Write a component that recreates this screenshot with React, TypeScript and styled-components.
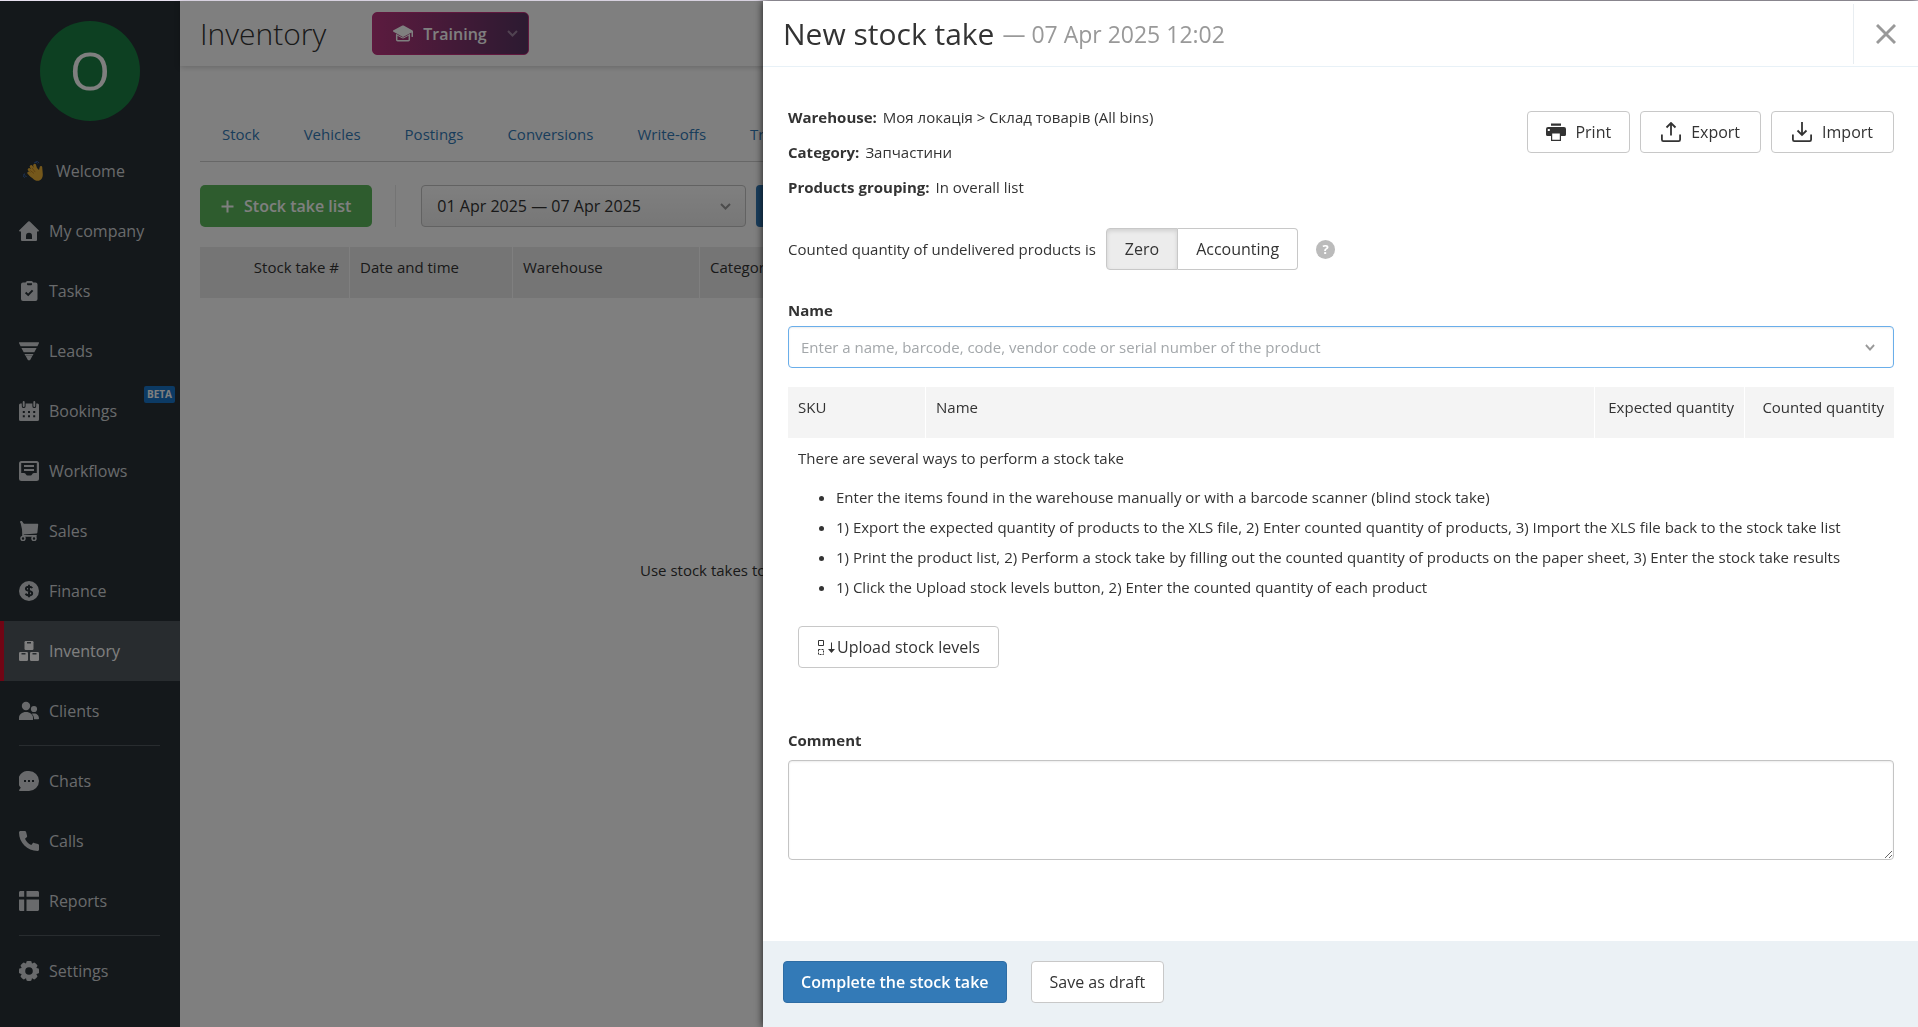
import React from "react";
import styled, { createGlobalStyle, css } from "styled-components";

const GlobalStyle = createGlobalStyle`
  *, *::before, *::after { box-sizing: border-box; }
  body {
    margin: 0;
    background: #fff;
    color: #333;
    font-family: "Open Sans", "Noto Sans", sans-serif;
    font-size: 15px;
    line-height: 20px;
    overflow: hidden;
  }
  button, input, select, textarea { font-family: inherit; color: inherit; margin: 0; }
  h1, h2, p, ul, dl, dd { margin: 0; padding: 0; }
  svg { display: block; flex: none; }
`;

/* ---------- shell ---------- */

const Page = styled.div`
  height: 100vh;
  display: flex;
  flex-direction: column;
  border-top: 1px solid #e6dfee;
`;

const Shell = styled.div`
  flex: 1;
  min-height: 0;
  display: flex;
`;

const Overlay = styled.div`
  position: fixed;
  inset: 1px 0 0 0;
  background: rgba(0, 0, 0, 0.5);
`;

/* ---------- sidebar ---------- */

const Sidebar = styled.nav`
  flex: none;
  width: 180px;
  padding-top: 20px;
  background: #283036;
`;

const Avatar = styled.div`
  width: 100px;
  height: 100px;
  margin: 0 auto 20px;
  border-radius: 50%;
  background: #1a8044;
  color: #fff;
  font-size: 52px;
  line-height: 98px;
  text-align: center;
`;

const NavItem = styled.a<{ $active?: boolean; $inset?: boolean }>`
  position: relative;
  display: flex;
  align-items: center;
  gap: ${(p) => (p.$inset ? 13 : 10)}px;
  height: 60px;
  padding-left: ${(p) => (p.$inset ? 19 : 15)}px;
  border-left: 4px solid transparent;
  color: #d2d5d8;
  font-size: 16px;
  text-decoration: none;
  ${(p) =>
    p.$active &&
    css`
      background: #50585e;
      border-left-color: #e00a28;
      color: #fff;
    `}
`;

const Beta = styled.span`
  position: absolute;
  top: 5px;
  right: 5px;
  height: 17px;
  padding: 0 3px;
  border-radius: 2px;
  background: #1874c8;
  color: #fff;
  font-size: 10px;
  font-weight: 700;
  line-height: 17px;
`;

const NavDivider = styled.hr`
  height: 1px;
  margin: 4px 20px 5px 19px;
  border: 0;
  background: #50585e;
`;

/* ---------- inventory page ---------- */

const Main = styled.main`
  flex: 1;
  min-width: 0;
  display: flex;
  flex-direction: column;
`;

const MainHeader = styled.header`
  display: flex;
  align-items: center;
  gap: 46px;
  height: 65px;
  padding-left: 20px;
  box-shadow: 0 1px 6px rgba(0, 0, 0, 0.2);
`;

const MainTitle = styled.h1`
  font-size: 30px;
  font-weight: 300;
  line-height: 40px;
`;

const TrainingButton = styled.button`
  display: flex;
  align-items: center;
  height: 43px;
  padding: 0 10px 0 20px;
  border: 1px solid #c2307e;
  border-radius: 5px;
  background: linear-gradient(90deg, #b8367e, #583462);
  color: #fff;
  font-size: 16px;
  font-weight: 600;
  gap: 10px;
  svg:last-child { margin-left: 10px; opacity: 0.4; }
`;

const MainBody = styled.div`
  flex: 1;
  display: flex;
  flex-direction: column;
  padding: 44px 20px 0;
`;

const Tabs = styled.div`
  display: flex;
  height: 52px;
  border-bottom: 1px solid #cfcfcf;
`;

const Tab = styled.a`
  padding: 14px 22px 0;
  color: #337ab7;
  text-decoration: none;
`;

const Toolbar = styled.div`
  display: flex;
  margin: 23px 0 20px;
  height: 42px;
`;

const AddButton = styled.button`
  display: flex;
  align-items: center;
  gap: 10px;
  padding: 0 21px;
  border: 0;
  border-radius: 5px;
  background: #5cb85c;
  color: #fff;
  font-size: 16px;
  font-weight: 600;
`;

const ToolbarRule = styled.span`
  width: 1px;
  margin: 0 25px 0 23px;
  background: #e8e8e8;
`;

const SelectWrap = styled.span`
  position: relative;
  width: 325px;
  margin-right: 10px;
  svg { position: absolute; top: 18px; right: 15px; color: #999; pointer-events: none; }
`;

const PeriodSelect = styled.select`
  appearance: none;
  width: 100%;
  height: 42px;
  padding: 0 15px;
  border: 1px solid #c4c4c4;
  border-radius: 4px;
  background: linear-gradient(#fff, #eee);
  font-size: 16px;
`;

const ApplyButton = styled.button`
  width: 42px;
  border: 0;
  border-radius: 4px;
  background: #337ab7;
`;

const EmptyNote = styled.p`
  margin: 262px 0 0 440px;
`;

/* ---------- tables ---------- */

const Table = styled.table`
  width: 100%;
  border-collapse: separate;
  border-spacing: 0;
  table-layout: fixed;
`;

const Th = styled.th<{ $width?: number; $right?: boolean; $tone?: string }>`
  width: ${(p) => (p.$width ? `${p.$width}px` : "auto")};
  height: 51px;
  padding: 10px 10px 0;
  background: ${(p) => p.$tone ?? "#f4f4f4"};
  border-right: 1px solid #fff;
  font-weight: 400;
  text-align: ${(p) => (p.$right ? "right" : "left")};
  vertical-align: top;
  &:last-child { border-right: 0; }
`;

/* ---------- drawer ---------- */

const Drawer = styled.section`
  position: fixed;
  inset: 1px 0 0 763px;
  display: flex;
  flex-direction: column;
  background: #fff;
  box-shadow: 0 0 8px rgba(0, 0, 0, 0.8);
`;

const DrawerHeader = styled.header`
  display: flex;
  align-items: center;
  height: 66px;
  padding: 0 0 0 20px;
  border-bottom: 1px solid #e8f1f7;
`;

const DrawerTitle = styled.h2`
  flex: 1;
  display: flex;
  align-items: center;
  gap: 8px;
  font-size: 30px;
  font-weight: 400;
  line-height: 42px;
`;

const DrawerDate = styled.span`
  color: #999;
  font-size: 23px;
`;

const CloseButton = styled.button`
  display: flex;
  align-items: center;
  justify-content: center;
  width: 65px;
  height: 60px;
  padding: 0;
  border: 0;
  border-left: 1px solid #e8edf1;
  background: none;
  color: #999;
`;

const DrawerBody = styled.div`
  flex: 1;
  min-height: 0;
  padding: 33px 24px 0 25px;
`;

const Info = styled.div`
  display: flex;
  justify-content: space-between;
  align-items: flex-start;
`;

const Facts = styled.dl`
  line-height: 35px;
`;

const Fact = styled.div`
  display: flex;
  gap: 6px;
  dt { font-weight: 700; }
`;

const Actions = styled.div`
  display: flex;
  gap: 10px;
  padding-top: 11px;
`;

const Button = styled.button<{ $pad?: number; $gap?: number }>`
  display: inline-flex;
  align-items: center;
  gap: ${(p) => p.$gap ?? 10}px;
  height: 42px;
  padding: 0 ${(p) => p.$pad ?? 18}px;
  border: 1px solid #c8c8c8;
  border-radius: 4px;
  background: #fff;
  color: #333;
  font-size: 16px;
`;

const PrimaryButton = styled(Button)`
  border-color: #2e6da4;
  background: #337ab7;
  color: #fff;
  font-weight: 600;
`;

const QuantityRow = styled.div`
  display: flex;
  align-items: center;
  margin: 23px 0 26px;
`;

const Segmented = styled.div`
  display: flex;
  margin: 0 18px 0 10px;
`;

const Segment = styled(Button)`
  &:first-child { border-radius: 4px 0 0 4px; }
  &:last-child { border-radius: 0 4px 4px 0; border-left: 0; }
  &[aria-pressed="true"] {
    background: #ececec;
    box-shadow: inset 0 2px 4px rgba(0, 0, 0, 0.12);
  }
`;

const Help = styled.button`
  width: 19px;
  height: 19px;
  padding: 0;
  border: 0;
  border-radius: 50%;
  background: #bbb;
  color: #fff;
  font-size: 13px;
  font-weight: 700;
  line-height: 19px;
`;

const FieldLabel = styled.label<{ $gap: number }>`
  display: block;
  margin-bottom: ${(p) => p.$gap}px;
  font-weight: 700;
  line-height: 28px;
`;

const Combo = styled.div`
  position: relative;
  margin-bottom: 19px;
  svg { position: absolute; top: 18px; right: 19px; color: #999; pointer-events: none; }
`;

const ComboInput = styled.input`
  display: block;
  width: 100%;
  height: 42px;
  padding: 0 40px 0 12px;
  border: 1px solid #6aaeea;
  border-radius: 4px;
  outline: 0;
  box-shadow: inset 0 1px 2px rgba(0, 0, 0, 0.08);
  font-size: 15px;
  &::placeholder { color: #a3a7aa; opacity: 1; }
`;

const Hints = styled.div`
  padding: 5px 10px 58px;
  line-height: 30px;
  ul { margin: 9px 0 24px; padding-left: 38px; }
`;

const Comment = styled.textarea`
  display: block;
  width: 100%;
  height: 100px;
  border: 1px solid #c4c4c4;
  border-radius: 4px;
  box-shadow: inset 0 1px 2px rgba(0, 0, 0, 0.08);
  resize: vertical;
`;

const DrawerFooter = styled.footer`
  display: flex;
  gap: 24px;
  padding: 20px 20px 24px;
  background: #ebf1f5;
`;

/* ---------- icons ---------- */

const Icon = ({ children, size = 20 }: { children: React.ReactNode; size?: number }) => (
  <svg width={size} height={size} viewBox="0 0 20 20" fill="currentColor" aria-hidden="true">
    {children}
  </svg>
);

const hole = "#283036";

const WaveIcon = () => (
  <Icon>
    <g stroke="#eab037" strokeLinecap="round" strokeWidth="3">
      <path d="M12 13L6.2 8.6M12 12L8.2 5.6M13.5 11L11.6 4.4M9 15L5.8 12" />
    </g>
    <path d="M7 12l6.5-5.5L16 9l.8-3.2c.3-1.1 2.2-1 2.4.2l.6 7.2c.1 4-2 6.5-5 6.6-2 0-3.600-.8-5-2.300L6 14z" fill="#eab037" />
    <path d="M7.300 9.500l3.700 3M9 6.800l3.200 4.300" stroke="#b67a1e" strokeWidth=".8" fill="none" />
    <path d="M11 2.200c1-1.200 2.600-1 3.300.2M12.500 1c1.400-1 3-.3 3.400 1.200M3.600 15.500c-1.600-.2-2.500-1.600-2-3M1.800 16.500c-1.300-.4-1.900-2-1.500-3.200" stroke="#3b68b0" strokeWidth="1" fill="none" />
  </Icon>
);

const HomeIcon = () => (
  <Icon>
    <path d="M9.200.5a1.200 1.200 0 0 1 1.600 0l8.900 8.700c.5.500.2 1.300-.6 1.300H18V19a1 1 0 0 1-1 1H3a1 1 0 0 1-1-1v-8.500H.9c-.8 0-1.100-.8-.6-1.300z" />
    <path d="M7 18v-3.300a3 3 0 0 1 6 0V18z" fill={hole} />
  </Icon>
);

const TasksIcon = () => (
  <Icon>
    <path d="M4 1.500h2.600C7 .5 7.800 0 9 0h3c1 0 1.800.5 2.200 1.500H16.500A2 2 0 0 1 18.500 3.500V18a2 2 0 0 1-2 2H4a2 2 0 0 1-2-2V3.500a2 2 0 0 1 2-2z" />
    <path d="M8 2.200h5v1a1 1 0 0 1-1 1H9a1 1 0 0 1-1-1z" fill={hole} />
    <path d="M6.600 11.500l2.600 2.400 4.400-4.600" stroke={hole} strokeWidth="1.900" fill="none" />
  </Icon>
);

const LeadsIcon = () => (
  <Icon>
    <path d="M.6 1.300h18.800c.6 0 .8.500.5 1L18.400 5.200H1.600L.1 2.300c-.3-.5 0-1 .5-1zM2.400 7h15.200l-2.300 4.300H4.700zM5.500 13h9l-.9 1.700H6.400zM6.700 15h6.600l-2 3.700c-.2.400-.5.500-.9.500h-.8c-.4 0-.7-.1-.9-.5z" />
  </Icon>
);

const BookingsIcon = () => (
  <Icon>
    <path d="M1.500 2.500h1.300v2.700a1.900 1.900 0 0 0 3.800 0V2.500h6.800v2.700a1.900 1.900 0 0 0 3.800 0V2.500h1.300A1.500 1.500 0 0 1 20 4v14.500a1.500 1.500 0 0 1-1.500 1.500h-17A1.500 1.500 0 0 1 0 18.500V4a1.500 1.500 0 0 1 1.500-1.500z" />
    <path d="M4.700 1v4M15.300 1v4" stroke="currentColor" strokeWidth="1.900" strokeLinecap="round" />
    <path d="M3.800 10h2v2h-2zM9 10h2v2H9zM14.200 10h2v2h-2zM3.800 14.200h2v2h-2zM9 14.200h2v2H9zM14.200 14.200h2v2h-2z" fill={hole} />
  </Icon>
);

const WorkflowsIcon = () => (
  <Icon>
    <rect width="20" height="20" rx="2.500" />
    <path d="M2.200 2h15.600v10H15c-1.200 0-1.600.8-2 1.600-.3.700-.8 1-1.500 1h-3c-.7 0-1.200-.3-1.500-1-.4-.8-.8-1.600-2-1.600H2.200z" fill={hole} />
    <path d="M5 5h10M5 9h10" stroke="currentColor" strokeWidth="1.900" />
  </Icon>
);

const SalesIcon = () => (
  <Icon>
    <path d="M1.300.8h1.400L4 2.800h14.300c.6 0 1 .4.900 1l-.8 7.700c-.1.500-.5.900-1 .9l-13.200 1z" />
    <path d="M1.300.9h1.200l1.500 2v12h13.700" stroke="currentColor" strokeWidth="1.600" fill="none" />
    <circle cx="4" cy="17.500" r="2" fill="none" stroke="currentColor" strokeWidth="1.500" />
    <circle cx="15" cy="17.500" r="2" fill="none" stroke="currentColor" strokeWidth="1.500" />
  </Icon>
);

const FinanceIcon = () => (
  <Icon>
    <circle cx="10" cy="10" r="10" />
    <path d="M13.200 7.200C12.700 6 11.600 5.700 10 5.700c-1.900 0-3.100.7-3.100 2.100 0 3 6.300 1.300 6.300 4.400 0 1.500-1.400 2.200-3.200 2.200-1.600 0-2.900-.5-3.300-1.800M10 3.800v12.400" stroke={hole} strokeWidth="1.900" fill="none" />
  </Icon>
);

const InventoryIcon = () => (
  <Icon>
    <rect x="5.500" width="9" height="9" rx="1.200" />
    <rect y="11" width="9" height="9" rx="1.200" />
    <rect x="11" y="11" width="9" height="9" rx="1.200" />
    <path d="M8 1.700h4M2.500 12.700h4M13.500 12.700h4" stroke="#50585e" strokeWidth="1.500" />
  </Icon>
);

const ClientsIcon = () => (
  <Icon>
    <circle cx="7" cy="5" r="4.200" />
    <path d="M0 19v-2.300C0 13.500 3 11 7 11s7 2.500 7 5.700V19z" />
    <circle cx="15" cy="8" r="3.100" />
    <path d="M15 18.200h4.200c.5 0 .8-.3.800-.8 0-3-2-5-5-5-.9 0-1.600.1-2.300.4 1.500 1.200 2.300 2.900 2.300 5.400z" />
  </Icon>
);

const ChatsIcon = () => (
  <Icon>
    <path d="M10 0a10 10 0 1 1 0 20H.8c-.8 0-1-.8-.5-1.300l1.500-1.900A10 10 0 0 1 10 0z" />
    <path d="M5 9h2v2H5zM9 9h2v2H9zM13 9h2v2h-2z" fill={hole} />
  </Icon>
);

const CallsIcon = () => (
  <Icon>
    <path d="M1.500 0h4.300c.6 0 1.100.4 1.300 1l1 4c.1.500 0 1-.4 1.300L6 7.700c1.300 2.900 3.400 5 6.300 6.300l1.400-1.700c.3-.4.800-.5 1.300-.4l4 1c.6.200 1 .7 1 1.300v4.300c0 .8-.6 1.500-1.500 1.500C8.300 20 0 11.700 0 1.500 0 .6.700 0 1.500 0z" />
  </Icon>
);

const ReportsIcon = () => (
  <Icon>
    <path d="M1.500 0H5.200v5.800H0V1.500C0 .7.700 0 1.500 0zM7.500 0h11c.8 0 1.500.7 1.500 1.500v4.300H7.500zM0 8.500h5.200V20H1.500C.7 20 0 19.300 0 18.500zM7.500 8.500H20v10c0 .8-.7 1.500-1.500 1.500h-11z" />
  </Icon>
);

const SettingsIcon = () => (
  <Icon>
    {[0, 45, 90, 135].map((a) => (
      <rect key={a} x="7.300" width="5.400" height="20" rx="1.400" transform={`rotate(${a} 10 10)`} />
    ))}
    <circle cx="10" cy="10" r="8.300" />
    <circle cx="10" cy="10" r="3.800" fill={hole} />
  </Icon>
);

const TrainingIcon = () => (
  <Icon>
    <path d="M9.400 1.600a1.300 1.300 0 0 1 1.200 0l8.600 4.700c.6.300.8.700.8 1.300v4.900c0 .8-1.500.8-1.500 0V8.600l-7.900 4.200a1.300 1.300 0 0 1-1.200 0L.5 7.800C-.2 7.400-.2 6.600.5 6.200z" />
    <path d="M3.700 10.500v5.300c0 .6.400 1 1 1h10.600c.6 0 1-.4 1-1v-5.300" fill="none" stroke="currentColor" strokeWidth="1.500" />
    <path d="M3 10.500l6 3.200a2 2 0 0 0 2 0l6-3.200" fill="none" stroke="currentColor" strokeWidth="1" />
  </Icon>
);

const PlusIcon = () => (
  <svg width="13" height="13" viewBox="0 0 13 13" aria-hidden="true">
    <path d="M6.500.5v12M.5 6.500h12" stroke="currentColor" strokeWidth="2" />
  </svg>
);

const Chevron = ({ size = 11 }: { size?: number }) => (
  <svg width={size} height="7" viewBox="0 0 11 7" preserveAspectRatio="none" fill="none" aria-hidden="true">
    <path d="M1 1l4.500 4.500L10 1" stroke="currentColor" strokeWidth="2" />
  </svg>
);

const CloseIcon = () => (
  <Icon>
    <path d="M1 1l18 18M19 1L1 19" stroke="currentColor" strokeWidth="2.900" />
  </Icon>
);

const PrintIcon = () => (
  <Icon>
    <path d="M5 1.500h10v2.300H5zM2 5h16a2 2 0 0 1 2 2v5.500a1.500 1.500 0 0 1-1.500 1.500H15v5H5v-5H1.500A1.500 1.500 0 0 1 0 12.500V7a2 2 0 0 1 2-2z" />
    <path d="M6.200 11.500h7.600v6.300H6.200zM1.800 7h2v2h-2z" fill="#fff" />
  </Icon>
);

const Tray = ({ up }: { up?: boolean }) => (
  <Icon>
    <g fill="none" stroke="currentColor" strokeWidth="1.800">
      <path d="M.9 12.500v5c0 .9.600 1.600 1.500 1.600h15.200c.9 0 1.500-.7 1.500-1.600v-5" />
      <path d={up ? "M10 13.500V1.500M5.500 5.500L10 1l4.500 4.500" : "M10 0v12.500M5.500 8.500L10 13l4.500-4.500"} />
    </g>
  </Icon>
);

const LevelsIcon = () => (
  <svg width="18" height="16" viewBox="0 0 18 16" fill="none" stroke="currentColor" aria-hidden="true">
    <path d="M1.500 1.500h5v5h-5z" />
    <path d="M1.500 10.500h5v5h-5z" strokeDasharray="2 1" />
    <path d="M14.500 3.500v9" />
    <path d="M11 10h7l-3.500 4z" fill="currentColor" stroke="none" />
  </svg>
);

/* ---------- data ---------- */

type Nav = { label: string; icon: React.ReactNode; active?: boolean; inset?: boolean; beta?: boolean };

const navGroups: Nav[][] = [
  [
    { label: "Welcome", icon: <WaveIcon />, inset: true },
    { label: "My company", icon: <HomeIcon /> },
    { label: "Tasks", icon: <TasksIcon /> },
    { label: "Leads", icon: <LeadsIcon /> },
    { label: "Bookings", icon: <BookingsIcon />, beta: true },
    { label: "Workflows", icon: <WorkflowsIcon /> },
    { label: "Sales", icon: <SalesIcon /> },
    { label: "Finance", icon: <FinanceIcon /> },
    { label: "Inventory", icon: <InventoryIcon />, active: true },
    { label: "Clients", icon: <ClientsIcon /> },
  ],
  [
    { label: "Chats", icon: <ChatsIcon /> },
    { label: "Calls", icon: <CallsIcon /> },
    { label: "Reports", icon: <ReportsIcon /> },
  ],
  [{ label: "Settings", icon: <SettingsIcon /> }],
];

const tabs = ["Stock", "Vehicles", "Postings", "Conversions", "Write-offs", "Transfers"];

const facts = [
  ["Warehouse:", "Моя локація > Склад товарів (All bins)"],
  ["Category:", "Запчастини"],
  ["Products grouping:", "In overall list"],
];

const hints = [
  "Enter the items found in the warehouse manually or with a barcode scanner (blind stock take)",
  "1) Export the expected quantity of products to the XLS file, 2) Enter counted quantity of products, 3) Import the XLS file back to the stock take list",
  "1) Print the product list, 2) Perform a stock take by filling out the counted quantity of products on the paper sheet, 3) Enter the stock take results",
  "1) Click the Upload stock levels button, 2) Enter the counted quantity of each product",
];

/* ---------- app ---------- */

export default function App() {
  const [mode, setMode] = React.useState("Zero");

  return (
    <Page>
      <GlobalStyle />
      <Shell>
        <Sidebar>
          <Avatar>O</Avatar>
          {navGroups.map((group, i) => (
            <React.Fragment key={i}>
              {i > 0 && <NavDivider />}
              {group.map((n) => (
                <NavItem key={n.label} href="#" $active={n.active} $inset={n.inset}>
                  {n.icon}
                  {n.label}
                  {n.beta && <Beta>BETA</Beta>}
                </NavItem>
              ))}
            </React.Fragment>
          ))}
        </Sidebar>

        <Main>
          <MainHeader>
            <MainTitle>Inventory</MainTitle>
            <TrainingButton>
              <TrainingIcon />
              Training
              <Chevron />
            </TrainingButton>
          </MainHeader>
          <MainBody>
            <Tabs>
              {tabs.map((t) => (
                <Tab key={t} href="#">{t}</Tab>
              ))}
            </Tabs>
            <Toolbar>
              <AddButton>
                <PlusIcon />
                Stock take list
              </AddButton>
              <ToolbarRule />
              <SelectWrap>
                <PeriodSelect aria-label="Period">
                  <option>01 Apr 2025 — 07 Apr 2025</option>
                </PeriodSelect>
                <Chevron />
              </SelectWrap>
              <ApplyButton aria-label="Apply" />
            </Toolbar>
            <Table>
              <thead>
                <tr>
                  <Th $width={150} $right $tone="#ebebeb">Stock take #</Th>
                  <Th $width={163} $tone="#ebebeb">Date and time</Th>
                  <Th $width={187} $tone="#ebebeb">Warehouse</Th>
                  <Th $tone="#ebebeb">Category</Th>
                </tr>
              </thead>
            </Table>
            <EmptyNote>Use stock takes to</EmptyNote>
          </MainBody>
        </Main>
      </Shell>

      <Overlay />

      <Drawer role="dialog" aria-labelledby="drawer-title">
        <DrawerHeader>
          <DrawerTitle id="drawer-title">
            New stock take
            <DrawerDate>— 07 Apr 2025 12:02</DrawerDate>
          </DrawerTitle>
          <CloseButton aria-label="Close">
            <CloseIcon />
          </CloseButton>
        </DrawerHeader>

        <DrawerBody>
          <Info>
            <Facts>
              {facts.map(([k, v]) => (
                <Fact key={k}>
                  <dt>{k}</dt>
                  <dd>{v}</dd>
                </Fact>
              ))}
            </Facts>
            <Actions>
              <Button $gap={9}><PrintIcon />Print</Button>
              <Button $pad={20}><Tray up />Export</Button>
              <Button $pad={20}><Tray />Import</Button>
            </Actions>
          </Info>

          <QuantityRow>
            Counted quantity of undelivered products is
            <Segmented>
              {["Zero", "Accounting"].map((m) => (
                <Segment key={m} aria-pressed={mode === m} onClick={() => setMode(m)}>{m}</Segment>
              ))}
            </Segmented>
            <Help aria-label="Help">?</Help>
          </QuantityRow>

          <FieldLabel htmlFor="product" $gap={2}>Name</FieldLabel>
          <Combo>
            <ComboInput
              id="product"
              type="text"
              placeholder="Enter a name, barcode, code, vendor code or serial number of the product"
            />
            <Chevron size={10} />
          </Combo>

          <Table>
            <thead>
              <tr>
                <Th $width={138}>SKU</Th>
                <Th>Name</Th>
                <Th $width={150} $right>Expected quantity</Th>
                <Th $width={149} $right>Counted quantity</Th>
              </tr>
            </thead>
          </Table>

          <Hints>
            <p>There are several ways to perform a stock take</p>
            <ul>
              {hints.map((h) => (
                <li key={h}>{h}</li>
              ))}
            </ul>
            <Button $gap={2}><LevelsIcon />Upload stock levels</Button>
          </Hints>

          <FieldLabel htmlFor="comment" $gap={6}>Comment</FieldLabel>
          <Comment id="comment" />
        </DrawerBody>

        <DrawerFooter>
          <PrimaryButton $pad={17}>Complete the stock take</PrimaryButton>
          <Button>Save as draft</Button>
        </DrawerFooter>
      </Drawer>
    </Page>
  );
}
